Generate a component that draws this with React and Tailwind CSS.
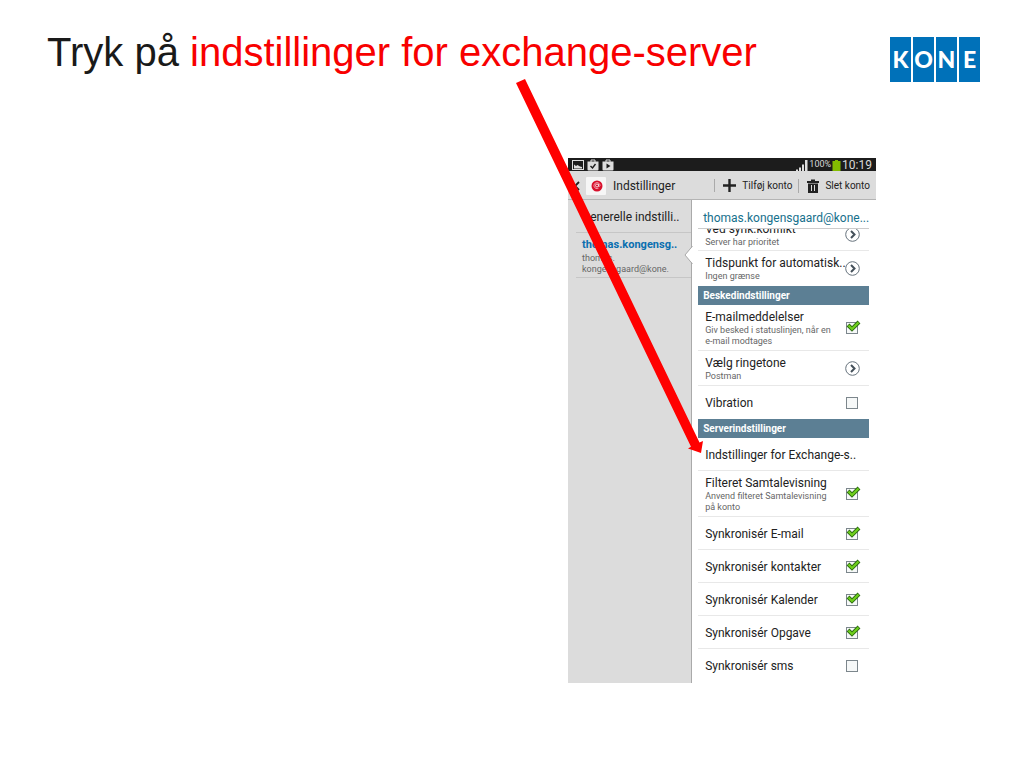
import React, { useState } from 'react';

const accountRows = [
  { id: 'conflict', label: 'Ved synk.konflikt', note: 'Server har prioritet', type: 'link' },
  { id: 'schedule', label: 'Tidspunkt for automatisk..', note: 'Ingen grænse', type: 'link' },
];

const notifyRows = [
  { id: 'mail', label: 'E-mailmeddelelser', note: 'Giv besked i statuslinjen, når en e-mail modtages', type: 'check', checked: true },
  { id: 'ringtone', label: 'Vælg ringetone', note: 'Postman', type: 'link' },
  { id: 'vibration', label: 'Vibration', type: 'check', checked: false },
];

const serverRows = [
  { id: 'exchange', label: 'Indstillinger for Exchange-s..', type: 'plain' },
  { id: 'filter', label: 'Filteret Samtalevisning', note: 'Anvend filteret Samtalevisning på konto', type: 'check', checked: true },
  { id: 'sync-mail', label: 'Synkronisér E-mail', type: 'check', checked: true },
  { id: 'sync-contacts', label: 'Synkronisér kontakter', type: 'check', checked: true },
  { id: 'sync-calendar', label: 'Synkronisér Kalender', type: 'check', checked: true },
  { id: 'sync-tasks', label: 'Synkronisér Opgave', type: 'check', checked: true },
  { id: 'sync-sms', label: 'Synkronisér sms', type: 'check', checked: false },
];

const KoneLogo = () => (
  <div className="flex gap-0.5 font-['Lato',sans-serif] text-[23px] font-black text-white" role="img" aria-label="KONE">
    {['K', 'O', 'N', 'E'].map((letter) => (
      <span key={letter} className="flex h-[45px] w-[21px] items-center justify-center bg-[#0071b9]">
        {letter}
      </span>
    ))}
  </div>
);

const BagIcon = ({ children }) => (
  <svg viewBox="0 0 12 12" className="size-3">
    <path d="M4 3V1h4v2" fill="none" stroke="#ddd" />
    <path d="M.5 2.500h11v8a1 1 0 0 1-1 1h-9a1 1 0 0 1-1-1z" fill="#ddd" />
    {children}
  </svg>
);

const StatusBar = () => (
  <div className="flex h-[13px] items-center bg-[#1c1c1c] px-1 text-[#d8d8d8]">
    <div className="flex flex-1 items-center gap-[3px]">
      <svg viewBox="0 0 12 12" className="size-3">
        <rect x=".5" y="1.500" width="11" height="9" fill="none" stroke="#ddd" />
        <path d="M2 5.500l2 1.500 1.500-1L8 7.500l2 .5v1.500H2z" fill="#ddd" />
      </svg>
      <BagIcon>
        <path d="M3.500 7l2 2 3-4" fill="none" stroke="#1c1c1c" strokeWidth="1.400" />
      </BagIcon>
      <BagIcon>
        <path d="M4.500 4.500v5l4-2.500z" fill="#1c1c1c" />
      </BagIcon>
    </div>
    <svg viewBox="0 0 12 12" className="size-3">
      <path d="M0 12v-1.500h2V12zM3 12V8.500h2V12zM6 12V5.500h2V12zM9 12V1h2.500v11z" fill="#ddd" />
    </svg>
    <span className="ml-px text-[9px]">100%</span>
    <svg viewBox="0 0 9 12" className="ml-px h-3 w-[9px]">
      <path d="M.5 2H3V1h3v1h2.500v10h-8z" fill="#84bd00" />
    </svg>
    <span className="ml-px text-xs leading-3">10:19</span>
  </div>
);

const TitleBar = () => (
  <div className="flex h-[29px] items-center border-b border-[#b4b4b4] bg-[#dcdcdc] pt-px pr-1.5 pl-1 text-[#222]">
    <button type="button" aria-label="Tilbage" className="flex items-center">
      <svg viewBox="0 0 10 12" className="h-3 w-[10px]">
        <path d="M7 2L3 6l4 4" fill="none" stroke="#222" strokeWidth="1.800" />
      </svg>
    </button>
    <svg viewBox="0 0 20 18" className="ml-1 h-[18px] w-5">
      <rect width="20" height="18" rx="1" fill="#f6f6f6" />
      <circle cx="11" cy="9" r="5.500" fill="#d8102c" />
      <circle cx="11" cy="8.500" r="1.500" fill="none" stroke="#fff" strokeWidth=".8" />
      <path d="M12.500 7v2.200q1 .8 1.500-.7a3 3 0 1 0-1.500 2.700" fill="none" stroke="#fff" strokeWidth=".6" />
    </svg>
    <span className="ml-[7px] flex-1 text-xs">Indstillinger</span>
    <button type="button" className="flex items-center border-l border-[#aaa] pr-1.5 pl-2 text-[10px] leading-3">
      <svg viewBox="0 0 13 13" className="mr-1.5 size-[13px]">
        <path d="M6.500 0v13M0 6.500h13" stroke="#222" strokeWidth="2.400" />
      </svg>
      Tilføj konto
    </button>
    <button type="button" className="flex items-center border-l border-[#aaa] pl-2 text-[10px] leading-3">
      <svg viewBox="0 0 12 14" className="mr-1.5 h-3.5 w-3">
        <path d="M0 2h4V.5h4V2h4v2H0zM1 4.500h10V14H1z" fill="#222" />
        <path d="M4.500 6v6M7.500 6v6" stroke="#dcdcdc" />
      </svg>
      Slet konto
    </button>
  </div>
);

const ChevronIcon = () => (
  <svg viewBox="0 0 15 15" className="size-[15px] shrink-0">
    <circle cx="7.500" cy="7.500" r="6.800" fill="#fff" stroke="#66727c" />
    <path d="M6 4l3.500 3.500L6 11" fill="none" stroke="#44505a" strokeWidth="2" />
  </svg>
);

const RowText = ({ label, note }) => (
  <span className="min-w-0 flex-1">
    <span className="block text-xs leading-4 whitespace-nowrap text-[#222]">{label}</span>
    {note && <span className="block text-[9px] leading-[11px] text-[#666]">{note}</span>}
  </span>
);

const rowClass = 'flex w-full min-h-[33px] items-center border-b border-[#e8e8e8] pt-1 pr-[9px] pb-[3px] pl-[7px] text-left last:border-b-0';

const SettingRow = ({ row }) => {
  const [checked, setChecked] = useState(Boolean(row.checked));

  if (row.type !== 'check') {
    return (
      <button type="button" className={rowClass}>
        <RowText label={row.label} note={row.note} />
        {row.type === 'link' && <ChevronIcon />}
      </button>
    );
  }

  return (
    <label className={rowClass}>
      <RowText label={row.label} note={row.note} />
      <span className="relative mr-px ml-2 flex size-[14px] shrink-0 items-center justify-center">
        <input
          type="checkbox"
          name={row.id}
          checked={checked}
          onChange={(e) => setChecked(e.target.checked)}
          className="size-3 appearance-none border border-[#7c868c] bg-[#f6f8f8]"
        />
        {checked && (
          <svg viewBox="0 0 16 14" className="pointer-events-none absolute -top-px left-px h-[14px] w-4">
            <path d="M2 5l4 4L13 2" fill="none" stroke="#2c6b12" strokeWidth="4" />
            <path d="M2.500 5.500L6 9l6.500-6.500" fill="none" stroke="#6fd01c" strokeWidth="2.200" />
          </svg>
        )}
      </span>
    </label>
  );
};

const Section = ({ title, rows }) => (
  <section>
    <h2 className="h-[19px] bg-[#5c7f94] px-[5px] text-[10px] leading-[19px] font-bold text-white">{title}</h2>
    {rows.map((row) => (
      <SettingRow key={row.id} row={row} />
    ))}
  </section>
);

const Sidebar = () => (
  <nav className="w-2/5 shrink-0 bg-[#dcdcdc] pl-2 text-[#222]">
    <button type="button" className="block h-[33px] w-full border-b border-[#c6c6c6] pt-px pl-1.5 text-left text-xs whitespace-nowrap">
      Generelle indstilli..
    </button>
    <button type="button" className="block h-[45px] w-full border-b border-[#c6c6c6] pt-px pl-1.5 text-left">
      <span className="block text-[11px] leading-4 font-bold text-[#0a6fb0]">thomas.kongensg..</span>
      <span className="block text-[9px] leading-[11px] text-[#666]">
        thomas.
        <br />
        kongensgaard@kone.
      </span>
    </button>
  </nav>
);

const PhoneScreen = () => (
  <div className="overflow-hidden bg-white font-['Roboto',sans-serif]">
    <StatusBar />
    <TitleBar />
    <div className="flex">
      <Sidebar />
      <div className="relative min-w-0 flex-1 border-l border-[#aaa] bg-white pr-[7px] pb-px pl-1.5">
        <svg viewBox="0 0 9 18" className="absolute top-[46px] -left-2 h-[18px] w-[9px]">
          <path d="M9 0L1 9l8 9z" fill="#fff" />
          <path d="M8.500 0L1 9l7.500 9" fill="none" stroke="#aaa" />
        </svg>
        <h2 className="h-[29px] border-b border-[#ccc] px-[5px] pt-[11px] text-xs leading-[15px] whitespace-nowrap text-[#16708c]">
          thomas.kongensgaard@kone...
        </h2>
        {/* the list is scrolled, so its first row is cut at the top */}
        <div className="flex h-[57px] flex-col justify-end overflow-hidden pb-0.5">
          {accountRows.map((row) => (
            <SettingRow key={row.id} row={row} />
          ))}
        </div>
        <Section title="Beskedindstillinger" rows={notifyRows} />
        <Section title="Serverindstillinger" rows={serverRows} />
      </div>
    </div>
  </div>
);

const PointerArrow = () => (
  <svg viewBox="0 0 200 380" className="pointer-events-none absolute -top-20 -left-14 h-[380px] w-[200px]" aria-hidden="true">
    <path d="M4 5l9-4L187.500 364.500l3.500-1.500-2 12-13-4.500 3-1.700z" fill="#f00" />
  </svg>
);

const App = () => {
  return (
    <main className="min-h-screen bg-white">
      <header className="flex items-start justify-between pt-[26px] pr-11 pl-[47px]">
        <h1 className="font-['Liberation_Sans',sans-serif] text-[40px] leading-[52px] text-[#1a1a1a]">
          Tryk på <span className="text-[#f80000]">indstillinger for exchange-server</span>
        </h1>
        <div className="pt-[11px]">
          <KoneLogo />
        </div>
      </header>
      <div className="flex justify-end pt-[76px] pr-[148px]">
        <div className="relative w-[308px]">
          <PhoneScreen />
          <PointerArrow />
        </div>
      </div>
    </main>
  );
};

export default App;
